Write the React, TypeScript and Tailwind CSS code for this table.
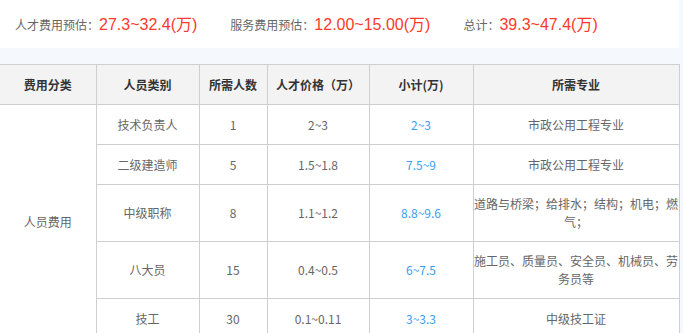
const font = { fontFamily: '"Noto Sans CJK SC", "Microsoft YaHei", sans-serif' };
const numFont = { fontFamily: '"Liberation Sans", "Noto Sans CJK SC", sans-serif' };

const summary = [
  { label: '人才费用预估：', value: '27.3~32.4' },
  { label: '服务费用预估：', value: '12.00~15.00' },
  { label: '总计：', value: '39.3~47.4' },
];

const rows = [
  { type: '技术负责人', count: '1', price: '2~3', total: '2~3', major: '市政公用工程专业', tall: false },
  { type: '二级建造师', count: '5', price: '1.5~1.8', total: '7.5~9', major: '市政公用工程专业', tall: false },
  { type: '中级职称', count: '8', price: '1.1~1.2', total: '8.8~9.6', major: '道路与桥梁；给排水；结构；机电；燃气；', tall: true },
  { type: '八大员', count: '15', price: '0.4~0.5', total: '6~7.5', major: '施工员、质量员、安全员、机械员、劳务员等', tall: true },
  { type: '技工', count: '30', price: '0.1~0.11', total: '3~3.3', major: '中级技工证', tall: false },
];

export default function App() {
  const cell = 'border border-[#cfcfcf] text-center align-middle text-[12px] leading-[18px] p-0';

  return (
    <div className="min-h-screen bg-[#f5f9fd]" style={font}>
      <div className="w-[679px]">
        <div className="flex h-[48px] items-center whitespace-nowrap bg-white pl-[15px]">
          {summary.map((s) => (
            <div key={s.label} className="mr-[33px] flex items-baseline">
              <span className="text-[12px] text-[#666]">{s.label}</span>
              <span className="text-[16px] leading-none text-[#fc3a2a]">
                <span style={numFont}>{s.value}(</span>
                <span>万</span>
                <span style={numFont}>)</span>
              </span>
            </div>
          ))}
        </div>

        <table className="mt-[16px] w-[679px] table-fixed border-collapse bg-white" style={font}>
          <colgroup>
            <col className="w-[96px]" />
            <col className="w-[103px]" />
            <col className="w-[68px]" />
            <col className="w-[102px]" />
            <col className="w-[104px]" />
            <col className="w-[206px]" />
          </colgroup>
          <thead>
            <tr className="h-[40px] bg-[#f3f3f4]">
              {['费用分类', '人员类别', '所需人数', '人才价格（万）', '小计(万)', '所需专业'].map((h, i) => (
                <th key={h} className={`${cell} font-bold text-[#333] ${i === 0 ? 'border-l-0' : ''}`}>
                  {h}
                </th>
              ))}
            </tr>
          </thead>
          <tbody>
            {rows.map((r, i) => (
              <tr key={r.type} className={r.tall ? 'h-[57px]' : 'h-[40px]'}>
                {i === 0 && (
                  <td rowSpan={5} className={`${cell} border-l-0 text-[#666]`}>
                    人员费用
                  </td>
                )}
                <td className={`${cell} text-[#666]`}>{r.type}</td>
                <td className={`${cell} text-[#666]`}>{r.count}</td>
                <td className={`${cell} text-[#666]`}>{r.price}</td>
                <td className={`${cell} text-[#3a9ef5]`}>{r.total}</td>
                <td className={`${cell} text-[#666]`}>{r.major}</td>
              </tr>
            ))}
          </tbody>
        </table>
      </div>
    </div>
  );
}
